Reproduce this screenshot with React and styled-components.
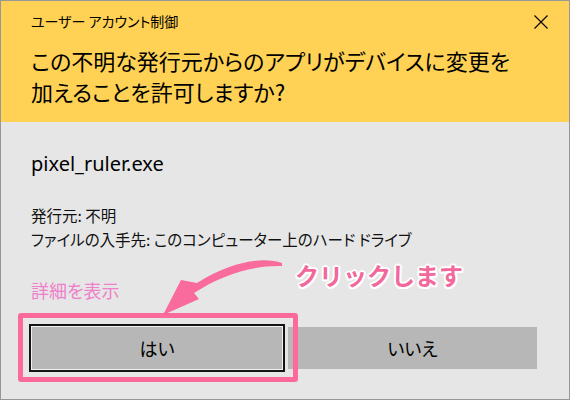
import React from "react";
import styled, { createGlobalStyle } from "styled-components";

const GlobalStyle = createGlobalStyle`
  html, body {
    margin: 0;
    padding: 0;
    background: #e6e6e6;
  }
  * {
    box-sizing: border-box;
  }
`;

const Window = styled.div`
  position: relative;
  width: 570px;
  height: 400px;
  border: 1px solid #979797;
  display: flex;
  flex-direction: column;
  font-family: "Noto Sans CJK JP", "Noto Sans", sans-serif;
  font-feature-settings: "palt";
  color: #000;
  overflow: hidden;
`;

const Header = styled.div`
  background-color: #ffd154;
  height: 121px;
  padding: 0 21px 0 30px;
  display: flex;
  flex-direction: column;
`;

const TitleRow = styled.div`
  height: 44px;
  padding-top: 11px;
  display: flex;
  justify-content: space-between;
  align-items: flex-start;
`;

const Title = styled.span`
  font-size: 14px;
  line-height: 18px;
`;

const Close = styled.button`
  width: 14px;
  height: 14px;
  margin-top: 3px;
  padding: 0;
  border: none;
  background: transparent;
  display: flex;
`;

const Question = styled.h1`
  margin: 0;
  font-size: 22px;
  font-weight: 400;
  line-height: 31px;
`;

const Body = styled.div`
  flex: 1;
  padding: 30px 32px 0 30px;
  display: flex;
  flex-direction: column;
`;

const FileName = styled.div`
  font-family: "Noto Sans", "Noto Sans CJK JP", sans-serif;
  font-size: 20px;
  line-height: 24px;
  color: #000;
`;

const Info = styled.div`
  margin-top: 27px;
  font-size: 15.5px;
  line-height: 24px;
  color: #111;
`;

const DetailsLink = styled.a`
  margin-top: 27px;
  font-size: 18px;
  line-height: 24px;
  color: #f07fcb;
  text-decoration: none;
  cursor: pointer;
`;

const ButtonRow = styled.div`
  margin-top: 25px;
  padding-left: 1px;
  display: flex;
  gap: 6px;
`;

const Highlight = styled.div`
  position: relative;
  display: flex;

  &::after {
    content: "";
    position: absolute;
    inset: -14px -16px -13px -14px;
    border: 5px solid #fb6a9b;
    border-radius: 3px;
    pointer-events: none;
  }
`;

const Button = styled.button`
  width: 250px;
  height: 42px;
  padding: 0;
  border: none;
  background-color: #b7b7b7;
  font-family: "Noto Sans CJK JP", sans-serif;
  font-feature-settings: "palt";
  font-size: 18px;
  color: #000;
  outline: ${(props) => (props.$focused ? "2px solid #141414" : "none")};
  outline-offset: 1px;
  box-shadow: ${(props) => (props.$focused ? "0 0 0 1px #f2f2f2" : "none")};
`;

const Callout = styled.div`
  position: absolute;
  left: 294px;
  top: 260px;
  font-size: 24px;
  line-height: 28px;
  font-weight: 700;
  font-feature-settings: normal;
  color: #f2689b;
  text-shadow:
    2px 0 0 #fff, -2px 0 0 #fff, 0 2px 0 #fff, 0 -2px 0 #fff,
    1.5px 1.5px 0 #fff, -1.5px 1.5px 0 #fff, 1.5px -1.5px 0 #fff, -1.5px -1.5px 0 #fff;
`;

const ArrowSvg = styled.svg`
  position: absolute;
  left: 0;
  top: 0;
  pointer-events: none;
`;

const CloseIcon = () => (
  <svg width="14" height="14" viewBox="0 0 14 14">
    <path d="M0.5 0.5 L13.5 13.5 M13.5 0.5 L0.5 13.5" stroke="#000" strokeWidth="1.1" />
  </svg>
);

const App = () => {
  return (
    <>
      <GlobalStyle />
      <Window>
        <Header>
          <TitleRow>
            <Title>ユーザー アカウント制御</Title>
            <Close aria-label="閉じる">
              <CloseIcon />
            </Close>
          </TitleRow>
          <Question>
            この不明な発行元からのアプリがデバイスに変更を
            <br />
            加えることを許可しますか?
          </Question>
        </Header>
        <Body>
          <FileName>pixel_ruler.exe</FileName>
          <Info>
            <div>発行元: 不明</div>
            <div>ファイルの入手先: このコンピューター上のハード ドライブ</div>
          </Info>
          <DetailsLink>詳細を表示</DetailsLink>
          <ButtonRow>
            <Highlight>
              <Button $focused>はい</Button>
            </Highlight>
            <Button>いいえ</Button>
          </ButtonRow>
        </Body>
        <ArrowSvg width="570" height="400" viewBox="0 0 570 400">
          <path
            d="M281 262 C263 256 232 259 196 282 L180 279 L162 314 L198 298 L193 292 C222 273 254 264 281 265 Z"
            fill="#f86b9c"
          />
        </ArrowSvg>
        <Callout>クリックします</Callout>
      </Window>
    </>
  );
};

export default App;
